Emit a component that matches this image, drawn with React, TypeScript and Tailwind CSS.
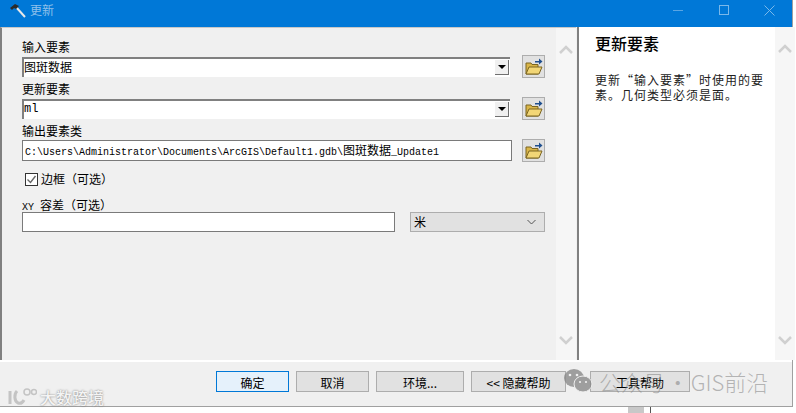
const cjk = "font-['Noto_Sans_CJK_SC',sans-serif]";

const FolderIcon = () => (
  <svg width="20" height="20" viewBox="0 0 20 20">
    <path d="M2 6h5l1 1.5h6V17H2z" fill="#d9b548" stroke="#7a6420" />
    <path d="M2 17l3-7h13l-3 7z" fill="#f2d676" stroke="#7a6420" />
    <path d="M11 6h4V3.5l3.5 3-3.5 3V7.500h-4z" fill="#1f4f8f" transform="translate(0 -2)" />
  </svg>
);

const FolderButton = () => (
  <button className="w-[23px] h-[23px] shrink-0 flex items-center justify-center bg-[#e1e1e1] border border-[#adadad]">
    <FolderIcon />
  </button>
);

const Chevron = ({ down }: { down?: boolean }) => (
  <svg width="14" height="9" viewBox="0 0 14 9" className="text-[#d0d0d0]">
    <path d={down ? "M1 1l6 6 6-6" : "M1 8l6-6 6 6"} fill="none" stroke="currentColor" strokeWidth="2.5" />
  </svg>
);

const Scrollbar = () => (
  <div className="w-5 shrink-0 bg-[#f6f6f6] flex flex-col items-center justify-between pt-[17px] pb-[15px]">
    <Chevron />
    <Chevron down />
  </div>
);

const Combo = ({ value, mono }: { value: string; mono?: boolean }) => (
  <div className="flex items-start gap-3">
    <div className="w-[488px] h-5 mt-[2px] flex bg-white border-l-2 border-t-2 border-[#808080]">
      <span className={`flex-1 text-[12px] leading-[16px] text-black ${mono ? "font-['Liberation_Mono',monospace]" : ""}`}>{value}</span>
      <div className="w-[14px] h-[15px] mt-px mr-px bg-[#f0f0f0] border-r border-b border-[#707070] flex items-center justify-center">
        <div className="w-0 h-0 border-x-[4px] border-x-transparent border-t-[4px] border-t-black" />
      </div>
    </div>
    <FolderButton />
  </div>
);

const Label = ({ children }: { children: React.ReactNode }) => (
  <div className="h-[17px] text-[12px] leading-[17px] text-black">{children}</div>
);

const ActionButton = ({ label, width, primary }: { label: string; width: string; primary?: boolean }) => (
  <button
    className={`${width} h-[21px] pt-[2px] text-[12px] leading-[17px] text-black border ${
      primary ? "bg-[#e5f1fb] border-[#0078d7]" : "bg-[#e1e1e1] border-[#adadad]"
    }`}
  >
    {label}
  </button>
);

export default function App() {
  return (
    <div className={`relative w-[796px] h-[413px] overflow-hidden bg-white ${cjk}`}>
      <div className="w-[793px] h-[407px] flex flex-col bg-[#f0f0f0] border-b border-r border-[#a0a0a0]">
        {/* title bar */}
        <div className="h-[27px] shrink-0 bg-[#0078d7] flex items-center pl-[9px] pb-[7px]">
          <svg width="17" height="17" viewBox="0 0 17 17">
            <path d="M7 5l9 10" stroke="#e8e8e8" strokeWidth="2" />
            <path d="M1 6l5-4 4 2-3 3-2-1-2 2z" fill="#2b2b2b" />
          </svg>
          <span className="ml-[4px] text-[12px] text-[#8fc0ea]">更新</span>
          <div className="ml-auto flex items-center">
            <div className="w-[10px] h-px bg-[#5aa5e3] mr-[36px]" />
            <div className="w-[10px] h-[10px] border border-[#7ab8ea] mr-[35px]" />
            <svg width="11" height="11" viewBox="0 0 11 11" className="mr-[17px]">
              <path d="M.5.5l10 10M10.5.5l-10 10" stroke="#7ab8ea" />
            </svg>
          </div>
        </div>

        {/* main panels */}
        <div className="h-[335px] shrink-0 flex border-b-2 border-white">
          <div className="w-[576px] shrink-0 flex border-l-2 border-[#808080] border-t border-t-[#c8c8c8]">
            <div className="w-[554px] shrink-0 pl-5 pt-[10px]">
              <Label>输入要素</Label>
              <Combo value="图斑数据" />
              <div className="h-[2px]" />
              <Label>更新要素</Label>
              <Combo value="ml" mono />
              <div className="h-[2px]" />
              <Label>输出要素类</Label>
              <div className="flex items-start gap-[10px]">
                <div className="w-[490px] h-[21px] mt-px bg-white border border-[#7a7a7a] pl-[2px] text-[10px] leading-[18px] text-black font-['Liberation_Mono',monospace] whitespace-nowrap overflow-hidden">
                  C:\Users\Administrator\Documents\ArcGIS\Default1.gdb\<span className={`text-[12px] ${cjk}`}>图斑数据</span>_Update1
                </div>
                <FolderButton />
              </div>
              <div className="flex items-center mt-[10px] ml-[3px] h-[14px]">
                <div className="w-[13px] h-[13px] bg-white border border-[#333] flex items-center justify-center">
                  <svg width="11" height="11" viewBox="0 0 11 11">
                    <path d="M1.5 5.5l3 3 5-6.5" fill="none" stroke="#666" strokeWidth="1.4" />
                  </svg>
                </div>
                <span className="ml-[3px] text-[12px] text-black">边框（可选）</span>
              </div>
              <div className="mt-[10px] h-[16px]">
                <Label>
                  <span className="font-['Liberation_Mono',monospace] text-[10px]">XY </span>容差（可选）
                </Label>
              </div>
              <div className="flex gap-[15px]">
                <div className="w-[373px] h-5 bg-white border border-[#7a7a7a]" />
                <div className="w-[135px] h-5 bg-[#e1e1e1] border border-[#adadad] flex items-center justify-between pl-[3px] pr-2 text-[12px] text-black">
                  米
                  <svg width="9" height="6" viewBox="0 0 9 6">
                    <path d="M.5 1l4 4 4-4" fill="none" stroke="#555" />
                  </svg>
                </div>
              </div>
            </div>
            <Scrollbar />
          </div>
          <div className="flex-1 flex border-l-2 border-[#808080] ml-px bg-white">
            <div className="flex-1 pl-[16px] pt-[5px]">
              <div className="text-[16px] leading-[22px] font-medium text-black">更新要素</div>
              <p className="mt-[18px] text-[12px] leading-[15px] tracking-[1px] text-[#222] w-[180px]">
                更新“输入要素”时使用的要素。几何类型必须是面。
              </p>
            </div>
            <Scrollbar />
          </div>
        </div>

        {/* action row */}
        <div className="flex-1 flex items-start pt-[9px] pl-[216px] gap-[7px]">
          <ActionButton label="确定" width="w-[73px]" primary />
          <ActionButton label="取消" width="w-[73px]" />
          <ActionButton label="环境..." width="w-[88px]" />
          <ActionButton label="<< 隐藏帮助" width="w-[95px]" />
          <div className="w-[10px]" />
          <ActionButton label="工具帮助" width="w-[100px]" />
        </div>
      </div>

      {/* strip of the window behind */}
      <div className="absolute left-[628px] top-[407px] w-[16px] h-[6px] bg-[#c8c8c8]" />
      <div className="absolute left-[650px] top-[407px] w-px h-[6px] bg-[#555]" />

      {/* watermarks */}
      <div className="absolute left-[7px] top-[387px] flex items-center h-[20px]">
        <svg width="30" height="20" viewBox="0 0 30 20">
          <path d="M3 4v13M10 4c-3 3-3 10 1 12 3 1 5-1 6-3" fill="none" stroke="#c4c4c4" strokeWidth="3" />
          <circle cx="20" cy="5" r="3" fill="none" stroke="#c4c4c4" strokeWidth="1.5" />
          <circle cx="27" cy="5" r="2.5" fill="none" stroke="#c4c4c4" strokeWidth="1.5" />
        </svg>
        <span className="ml-[3px] text-[16px] font-medium text-[#f4f4f4] [text-shadow:0_0_2px_#777]">大数跨境</span>
      </div>
      <div className="absolute left-[563px] top-[367px] flex items-center h-[28px] text-[#8a8a8a]/60 pointer-events-none">
        <svg width="30" height="26" viewBox="0 0 30 26" className="opacity-80">
          <ellipse cx="11" cy="10" rx="10" ry="9" fill="#8a8a8a" />
          <ellipse cx="20" cy="16" rx="9" ry="8" fill="#8a8a8a" stroke="#f0f0f0" />
          <circle cx="7" cy="7" r="1.3" fill="#f0f0f0" />
          <circle cx="14" cy="7" r="1.3" fill="#f0f0f0" />
          <circle cx="17" cy="14" r="1.1" fill="#f0f0f0" />
          <circle cx="23" cy="14" r="1.1" fill="#f0f0f0" />
        </svg>
        <span className="ml-[6px] text-[22px] font-light [word-spacing:-3px] whitespace-nowrap">公众号 · GIS前沿</span>
      </div>
    </div>
  );
}
